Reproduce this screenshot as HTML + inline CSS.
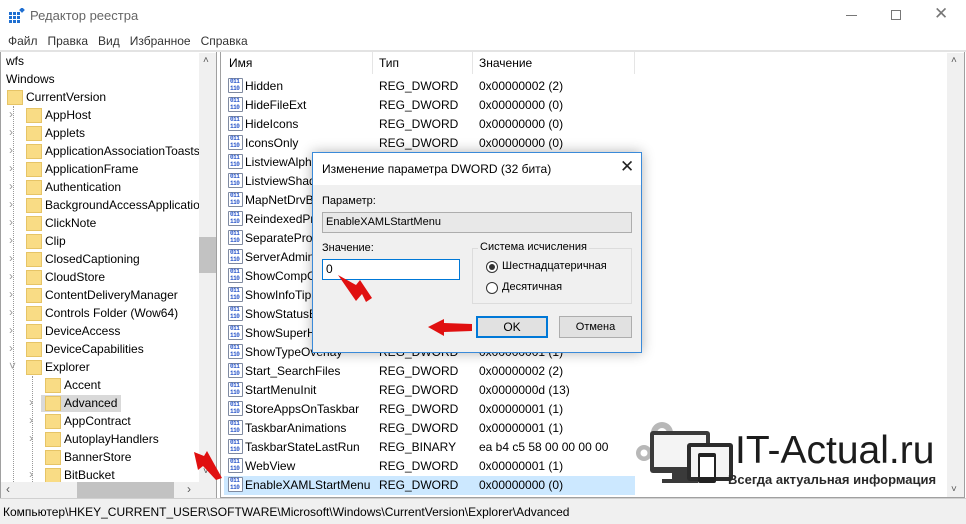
<!DOCTYPE html>
<html><head><meta charset="utf-8"><style>
*{margin:0;padding:0;box-sizing:border-box}
body{width:966px;height:524px;overflow:hidden;background:#fff;font-family:"Liberation Sans","DejaVu Sans",sans-serif;font-size:12px;color:#000;position:relative}
.a{position:absolute;white-space:nowrap}
.t{font-size:12px;line-height:18px}
.fold{position:absolute;width:16px;height:15px;background:#f9dc85;border:1px solid #e6c466}
.ic{position:absolute;width:15px;height:15px;border:1px solid #7f8aa0;border-radius:1px;background:#fff}
.ic:before{content:"011\A 110";white-space:pre;position:absolute;left:1px;top:-1px;font:bold 6px/7px "Liberation Mono",monospace;color:#2452c8;letter-spacing:-0.5px}
.chev{position:absolute;color:#999;font-size:12px}
.dots{position:absolute;border-left:1px dotted #999}
</style></head><body>
<div class="a" style="left:0;top:0;width:966px;height:32px;background:#fff"></div>
<svg class="a" style="left:9px;top:8px" width="16" height="16"><g fill="#1f6fd1"><rect x="0" y="4" width="3" height="3"/><rect x="4" y="4" width="3" height="3"/><rect x="8" y="4" width="3" height="3"/><rect x="0" y="8" width="3" height="3"/><rect x="4" y="8" width="3" height="3"/><rect x="8" y="8" width="3" height="3"/><rect x="0" y="12" width="3" height="3"/><rect x="4" y="12" width="3" height="3"/><rect x="8" y="12" width="3" height="3"/><rect x="11" y="0" width="4" height="4" transform="rotate(45 13 2)"/></g></svg>
<div class="a" style="left:30px;top:8px;font-size:13px;color:#666">Редактор реестра</div>
<div class="a" style="left:846px;top:15px;width:11px;height:1px;background:#777"></div>
<div class="a" style="left:891px;top:10px;width:10px;height:10px;border:1px solid #777"></div>
<div class="a" style="left:934px;top:4px;font-size:17px;color:#777">✕</div>
<div class="a" style="left:8px;top:34px;font-size:12px;color:#333">Файл&nbsp;&nbsp;&nbsp;Правка&nbsp;&nbsp;&nbsp;Вид&nbsp;&nbsp;&nbsp;Избранное&nbsp;&nbsp;&nbsp;Справка</div>
<div class="a" style="left:0;top:50px;width:966px;height:2px;background:#e3e3e3"></div>
<!-- left pane -->
<div class="a" style="left:0;top:52px;width:217px;height:446px;border:1px solid #a0a0a0;border-top:none;background:#fff"></div>
<div class="a" style="left:0;top:0;width:199px;height:482px;overflow:hidden">
<div class="a t" style="left:6px;top:52px">wfs</div>
<div class="a t" style="left:6px;top:70px">Windows</div>
<div class="fold" style="left:7px;top:90px"></div>
<div class="a t" style="left:26px;top:88px">CurrentVersion</div>
<div class="dots" style="left:13px;top:106px;height:376px"></div>
<div class="dots" style="left:32px;top:376px;height:106px"></div>
<div id="l1"></div>
</div>
<div class="a" style="left:199px;top:53px;width:17px;height:429px;background:#f0f0f0"></div>
<div class="a" style="left:199px;top:237px;width:17px;height:36px;background:#c2c2c2"></div>
<div class="a" style="left:203px;top:55px;color:#555;font-size:10px">&#x2C4;</div>
<div class="a" style="left:203px;top:466px;color:#555;font-size:10px">&#x2C5;</div>
<div class="a" style="left:1px;top:482px;width:215px;height:16px;background:#f0f0f0"></div>
<div class="a" style="left:77px;top:482px;width:97px;height:16px;background:#c2c2c2"></div>
<div class="a" style="left:6px;top:482px;color:#555;font-size:12px">‹</div>
<div class="a" style="left:187px;top:482px;color:#555;font-size:12px">›</div>
<!-- right pane -->
<div class="a" style="left:220px;top:52px;width:745px;height:446px;border:1px solid #a0a0a0;border-top:none;background:#fff"></div>
<div class="a" style="left:947px;top:53px;width:17px;height:444px;background:#f0f0f0"></div>
<div class="a" style="left:951px;top:55px;color:#555;font-size:10px">&#x2C4;</div>
<div class="a" style="left:951px;top:484px;color:#555;font-size:10px">&#x2C5;</div>
<div class="a" style="left:372px;top:52px;width:1px;height:22px;background:#e5e5e5"></div>
<div class="a" style="left:472px;top:52px;width:1px;height:22px;background:#e5e5e5"></div>
<div class="a" style="left:634px;top:52px;width:1px;height:22px;background:#e5e5e5"></div>
<div class="a t" style="left:229px;top:54px">Имя</div>
<div class="a t" style="left:379px;top:54px">Тип</div>
<div class="a t" style="left:479px;top:54px">Значение</div>
<div class="a" style="left:224px;top:476px;width:411px;height:19px;background:#cce8ff"></div>
<div id="r"></div>
<div class="a" style="left:0;top:498px;width:966px;height:26px;background:#f0f0f0;border-top:1px solid #d0d0d0"></div>
<div class="a" style="left:3px;top:505px;font-size:12px">Компьютер\HKEY_CURRENT_USER\SOFTWARE\Microsoft\Windows\CurrentVersion\Explorer\Advanced</div>
<!-- logo -->
<svg class="a" style="left:632px;top:415px" width="105" height="70">
<g fill="#b8b8b8"><circle cx="30" cy="18" r="11"/><circle cx="12" cy="38" r="8"/></g>
<g fill="#fff"><circle cx="30" cy="18" r="5"/><circle cx="12" cy="38" r="3.5"/></g>
<rect x="18" y="16" width="60" height="42" rx="3" fill="#3a3a3a"/><rect x="22" y="20" width="52" height="32" fill="#f4f4f4"/>
<rect x="40" y="58" width="16" height="8" fill="#3a3a3a"/><rect x="30" y="64" width="36" height="4" fill="#3a3a3a"/>
<rect x="55" y="28" width="46" height="38" rx="3" fill="#2c2c2c"/><rect x="59" y="32" width="38" height="30" fill="#f4f4f4"/>
<rect x="66" y="38" width="18" height="30" rx="2" fill="#222"/><rect x="68" y="42" width="14" height="20" fill="#fff"/>
</svg>
<div class="a" style="left:735px;top:431px;font-size:39px;line-height:40px;color:#1c1c1c">IT-Actual.ru</div>
<div class="a" style="left:728px;top:472px;font-size:13px;font-weight:bold;color:#2a2a2a">Всегда актуальная информация</div>
<!-- dialog -->
<div class="a" style="left:312px;top:152px;width:330px;height:201px;background:#f0f0f0;border:1px solid #3a8ad9;box-shadow:0 0 12px rgba(0,0,0,.3)"></div>
<div class="a" style="left:313px;top:153px;width:328px;height:32px;background:#fff"></div>
<div class="a" style="left:322px;top:162px;font-size:12px">Изменение параметра DWORD (32 бита)</div>
<div class="a" style="left:620px;top:157px;font-size:17px;color:#222">✕</div>
<div class="a" style="left:322px;top:195px;font-size:11px">Параметр:</div>
<div class="a" style="left:322px;top:212px;width:310px;height:21px;border:1px solid #adadad;background:#e8e8e8;font-size:11px;line-height:19px;padding-left:3px">EnableXAMLStartMenu</div>
<div class="a" style="left:322px;top:242px;font-size:11px">Значение:</div>
<div class="a" style="left:322px;top:259px;width:138px;height:21px;border:1px solid #0078d7;background:#fff;font-size:12px;line-height:19px;padding-left:3px">0</div>
<div class="a" style="left:472px;top:248px;width:160px;height:56px;border:1px solid #dcdcdc"></div>
<div class="a" style="left:478px;top:241px;font-size:11px;background:#f0f0f0;padding:0 2px">Система исчисления</div>
<div class="a" style="left:486px;top:261px;width:12px;height:12px;border:1px solid #333;border-radius:50%;background:#fff"></div>
<div class="a" style="left:489px;top:264px;width:6px;height:6px;border-radius:50%;background:#333"></div>
<div class="a" style="left:502px;top:260px;font-size:11px">Шестнадцатеричная</div>
<div class="a" style="left:486px;top:282px;width:12px;height:12px;border:1px solid #333;border-radius:50%;background:#fff"></div>
<div class="a" style="left:502px;top:281px;font-size:11px">Десятичная</div>
<div class="a" style="left:476px;top:316px;width:72px;height:22px;border:2px solid #0078d7;background:#e1e1e1;text-align:center;font-size:12px;line-height:18px">OK</div>
<div class="a" style="left:559px;top:316px;width:73px;height:22px;border:1px solid #adadad;background:#e1e1e1;text-align:center;font-size:11px;line-height:20px">Отмена</div>
<svg class="a" style="left:0;top:0" width="966" height="524">
<path d="M338 275 L356 285 L360 280 L372 298 L366 302 L362 294 L356 301 Z" fill="#e01010"/>
<path d="M428 327 L444 319 L444 323 L472 324 L472 331 L444 332 L444 336 Z" fill="#e01010"/>
<path d="M194 452 L204 456 L207 451 L222 478 L216 480 L203 466 L198 470 Z" fill="#e01010"/>
</svg>
<script>
var L=[["AppHost",1],["Applets",1],["ApplicationAssociationToasts",1],["ApplicationFrame",1],["Authentication",1],["BackgroundAccessApplications",1],["ClickNote",1],["Clip",1],["ClosedCaptioning",1],["CloudStore",1],["ContentDeliveryManager",1],["Controls Folder (Wow64)",1],["DeviceAccess",1],["DeviceCapabilities",1],["Explorer",2]];
var h="";L.forEach(function(e,i){var y=106+i*18;
h+='<div class="chev" style="left:9px;top:'+(y+1)+'px">'+(e[1]==2?'&#x2C5;':'›')+'</div><div class="fold" style="left:26px;top:'+(y+2)+'px"></div><div class="a t" style="left:45px;top:'+y+'px">'+e[0]+'</div>';});
var L2=[["Accent",0],["Advanced",1],["AppContract",1],["AutoplayHandlers",1],["BannerStore",0],["BitBucket",1]];
L2.forEach(function(e,i){var y=376+i*18;
if(i==1)h+='<div class="a" style="left:41px;top:'+(y+1)+'px;width:80px;height:17px;background:#d9d9d9"></div>';
if(e[1])h+='<div class="chev" style="left:29px;top:'+(y+1)+'px">›</div>';
h+='<div class="fold" style="left:45px;top:'+(y+2)+'px"></div><div class="a t" style="left:64px;top:'+y+'px">'+e[0]+'</div>';});
document.getElementById('l1').innerHTML=h;
var R=[["Hidden","REG_DWORD","0x00000002 (2)"],["HideFileExt","REG_DWORD","0x00000000 (0)"],["HideIcons","REG_DWORD","0x00000000 (0)"],["IconsOnly","REG_DWORD","0x00000000 (0)"],["ListviewAlphaSelect","",""],["ListviewShadow","",""],["MapNetDrvBtn","",""],["ReindexedProfile","",""],["SeparateProcess","",""],["ServerAdminUI","",""],["ShowCompColor","",""],["ShowInfoTip","",""],["ShowStatusBar","",""],["ShowSuperHidden","",""],["ShowTypeOverlay","REG_DWORD","0x00000001 (1)"],["Start_SearchFiles","REG_DWORD","0x00000002 (2)"],["StartMenuInit","REG_DWORD","0x0000000d (13)"],["StoreAppsOnTaskbar","REG_DWORD","0x00000001 (1)"],["TaskbarAnimations","REG_DWORD","0x00000001 (1)"],["TaskbarStateLastRun","REG_BINARY","ea b4 c5 58 00 00 00 00"],["WebView","REG_DWORD","0x00000001 (1)"],["EnableXAMLStartMenu","REG_DWORD","0x00000000 (0)"]];
h="";R.forEach(function(e,i){var y=77+i*19;
h+='<div class="ic" style="left:228px;top:'+(y+1)+'px"></div><div class="a t" style="left:245px;top:'+y+'px">'+e[0]+'</div><div class="a t" style="left:379px;top:'+y+'px">'+e[1]+'</div><div class="a t" style="left:479px;top:'+y+'px">'+e[2]+'</div>';});
document.getElementById('r').innerHTML=h;
</script>
</body></html>
